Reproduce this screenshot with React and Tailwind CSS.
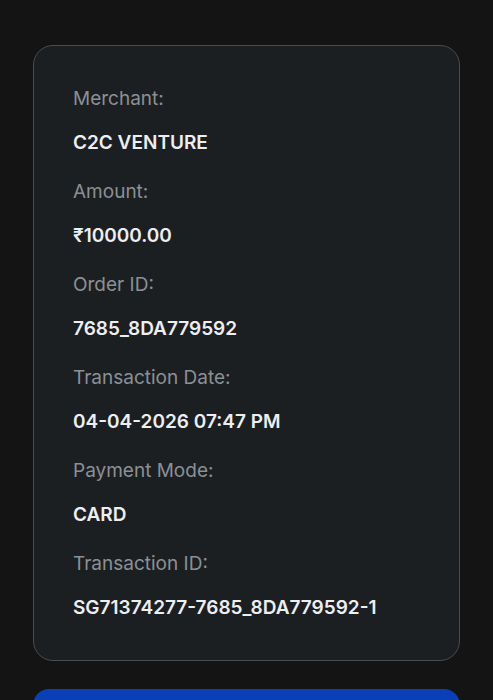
import React from "react";

const rows = [
    { label: "Merchant:", value: "C2C VENTURE" },
    { label: "Amount:", value: "₹10000.00" },
    { label: "Order ID:", value: "7685_8DA779592" },
    { label: "Transaction Date:", value: "04-04-2026 07:47 PM" },
    { label: "Payment Mode:", value: "CARD" },
    { label: "Transaction ID:", value: "SG71374277-7685_8DA779592-1" },
];

const App = () => {
    return (
        <div className="min-h-screen bg-[#141414] px-[33px] pt-[45px] font-['Inter','Noto_Sans',sans-serif]">
            <div className="flex flex-col gap-[21px] rounded-[20px] border border-[#4a4c4f] bg-[#1c1f22] pb-[38px] pl-[39px] pr-6 pt-[39px]">
                {rows.map((row) => (
                    <div key={row.label} className="flex flex-col gap-[16px]">
                        <p className="text-[19px] leading-[28px] text-[#8b9096]">{row.label}</p>
                        <p className="text-[19px] font-semibold leading-[28px] text-[#eceef1]">{row.value}</p>
                    </div>
                ))}
            </div>

            <button className="mt-[28px] h-[56px] w-full rounded-[16px] bg-[#0a3fb8]" />
        </div>
    );
};

export default App;
